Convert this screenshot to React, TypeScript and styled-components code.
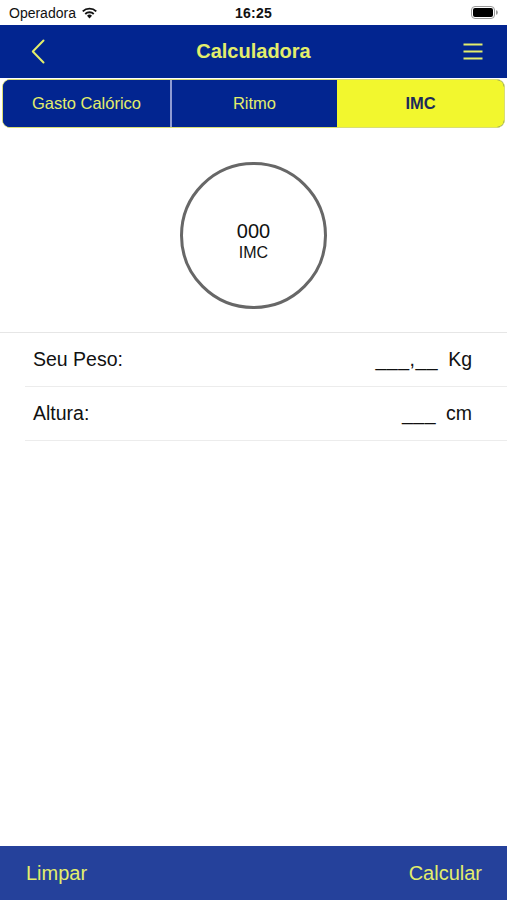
import React from "react";
import styled, { createGlobalStyle } from "styled-components";

const Global = createGlobalStyle`
  html, body { margin: 0; padding: 0; background: #fff; }
  body { font-family: "Liberation Sans", Arial, sans-serif; -webkit-font-smoothing: antialiased; }
  * { box-sizing: border-box; }
`;

const NAVY = "#022590";
const YELLOW_TEXT = "#e3ee6b";

const Screen = styled.div`
  width: 507px;
  height: 900px;
  display: flex;
  flex-direction: column;
  background: #fff;
  overflow: hidden;
`;

const StatusBar = styled.div`
  height: 25px;
  display: grid;
  grid-template-columns: 1fr auto 1fr;
  align-items: center;
  padding: 0 9px;
  font-size: 14px;
  color: #111;
`;

const Carrier = styled.div`
  display: flex;
  align-items: center;
  gap: 5px;
`;

const Time = styled.div`
  font-weight: 700;
  letter-spacing: 0.2px;
`;

const BatteryWrap = styled.div`
  display: flex;
  justify-content: flex-end;
`;

const NavBar = styled.div`
  height: 53px;
  background: ${NAVY};
  display: flex;
  align-items: center;
  justify-content: space-between;
  padding: 0 24px 0 31px;
  position: relative;
`;

const Title = styled.div`
  position: absolute;
  left: 0;
  right: 0;
  text-align: center;
  font-size: 20px;
  font-weight: 700;
  color: ${YELLOW_TEXT};
  pointer-events: none;
`;

const IconButton = styled.div`
  display: flex;
  align-items: center;
  color: ${YELLOW_TEXT};
`;

const SegmentWrap = styled.div`
  padding: 1px 2px 0 2px;
  background: #fff;
`;

const Segmented = styled.div`
  height: 49px;
  display: grid;
  grid-template-columns: 1fr 1fr 1fr;
  border: 1px solid #d9de74;
  border-radius: 8px;
  overflow: hidden;
  background: ${NAVY};
`;

const Segment = styled.div<{ $active?: boolean; $divider?: boolean }>`
  display: flex;
  align-items: center;
  justify-content: center;
  font-size: 16.5px;
  font-weight: ${(p) => (p.$active ? 700 : 500)};
  color: ${(p) => (p.$active ? "#1d2a5a" : YELLOW_TEXT)};
  background: ${(p) => (p.$active ? "#f2f72e" : NAVY)};
  border-left: ${(p) => (p.$divider ? "2px solid #8e9bd3" : "none")};
`;

const Gauge = styled.div`
  height: 205px;
  display: flex;
  align-items: center;
  justify-content: center;
  border-bottom: 1px solid #e6e6e6;
`;

const Circle = styled.div`
  width: 147px;
  height: 147px;
  border-radius: 50%;
  border: 3px solid #676767;
  display: flex;
  flex-direction: column;
  align-items: center;
  justify-content: center;
  margin-top: 11px;
  padding-top: 10px;
  color: #111;
`;

const Value = styled.div`
  font-size: 20px;
  line-height: 24px;
`;

const Unit = styled.div`
  font-size: 16px;
  line-height: 20px;
`;

const Form = styled.div`
  padding-left: 25px;
`;

const Row = styled.div`
  height: 54px;
  display: flex;
  align-items: center;
  justify-content: space-between;
  padding: 0 35px 0 8px;
  border-bottom: 1px solid #ececec;
  font-size: 19.5px;
  color: #111;
`;

const RowValue = styled.div`
  display: flex;
  align-items: baseline;
  gap: 10px;
`;

const Blank = styled.span`
  letter-spacing: 0.5px;
`;

const Spacer = styled.div`
  flex: 1;
`;

const BottomBar = styled.div`
  height: 54px;
  background: #25419b;
  display: flex;
  align-items: center;
  justify-content: space-between;
  padding: 0 25px 0 26px;
  font-size: 20px;
  color: ${YELLOW_TEXT};
`;

const Wifi = () => (
  <svg width="17" height="13" viewBox="0 0 17 13">
    <path d="M8.5 12.5 L6 9.8 A3.6 3.6 0 0 1 11 9.8 Z" fill="#111" />
    <path d="M3.6 7.3 A7 7 0 0 1 13.4 7.3 L12.1 8.7 A5.2 5.2 0 0 0 4.9 8.7 Z" fill="#111" />
    <path d="M1.1 4.7 A10.6 10.6 0 0 1 15.9 4.7 L14.6 6.1 A8.7 8.7 0 0 0 2.4 6.1 Z" fill="#111" />
  </svg>
);

const Battery = () => (
  <svg width="27" height="13" viewBox="0 0 27 13">
    <rect x="0.5" y="0.5" width="23" height="12" rx="3.5" fill="none" stroke="#999" />
    <rect x="2" y="2" width="20" height="9" rx="2" fill="#000" />
    <path d="M25 4.3 a1.8 2.2 0 0 1 0 4.4 Z" fill="#999" />
  </svg>
);

const Chevron = () => (
  <svg width="14" height="25" viewBox="0 0 14 25">
    <path d="M12.5 1.5 L1.8 12.5 L12.5 23.5" fill="none" stroke={YELLOW_TEXT} strokeWidth="2" strokeLinecap="round" strokeLinejoin="round" />
  </svg>
);

const Menu = () => (
  <svg width="20" height="17" viewBox="0 0 20 17">
    <path d="M0.5 1.5 H19.5 M0.5 8.5 H19.5 M0.5 15.5 H19.5" stroke={YELLOW_TEXT} strokeWidth="2" />
  </svg>
);

export default function App() {
  return (
    <>
      <Global />
      <Screen>
        <StatusBar>
          <Carrier>
            Operadora <Wifi />
          </Carrier>
          <Time>16:25</Time>
          <BatteryWrap>
            <Battery />
          </BatteryWrap>
        </StatusBar>
        <NavBar>
          <IconButton>
            <Chevron />
          </IconButton>
          <Title>Calculadora</Title>
          <IconButton>
            <Menu />
          </IconButton>
        </NavBar>
        <SegmentWrap>
          <Segmented>
            <Segment>Gasto Calórico</Segment>
            <Segment $divider>Ritmo</Segment>
            <Segment $active>IMC</Segment>
          </Segmented>
        </SegmentWrap>
        <Gauge>
          <Circle>
            <Value>000</Value>
            <Unit>IMC</Unit>
          </Circle>
        </Gauge>
        <Form>
          <Row>
            <span>Seu Peso:</span>
            <RowValue>
              <Blank>___,__</Blank>
              <span>Kg</span>
            </RowValue>
          </Row>
          <Row>
            <span>Altura:</span>
            <RowValue>
              <Blank>___</Blank>
              <span>cm</span>
            </RowValue>
          </Row>
        </Form>
        <Spacer />
        <BottomBar>
          <span>Limpar</span>
          <span>Calcular</span>
        </BottomBar>
      </Screen>
    </>
  );
}
